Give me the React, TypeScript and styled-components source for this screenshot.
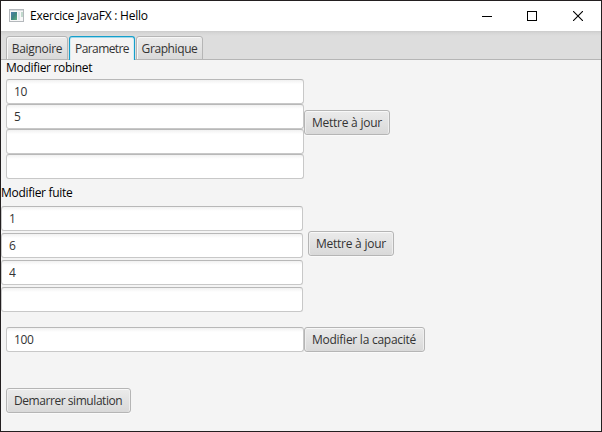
import React from "react";
import styled, { createGlobalStyle } from "styled-components";

const GlobalStyle = createGlobalStyle`
  *, *::before, *::after { box-sizing: border-box; }
  html, body { margin: 0; padding: 0; overflow: hidden; }
`;

const Window = styled.div`
  width: 602px;
  height: 432px;
  display: flex;
  flex-direction: column;
  border: 1px solid #231f20;
  background: #f4f4f4;
  font-family: "Open Sans", "Noto Sans", sans-serif;
  font-size: 12px;
  line-height: 16px;
  color: #333;
`;

const TitleBar = styled.header`
  height: 30px;
  flex: none;
  display: flex;
  align-items: center;
  background: #fff;
  color: #000;
`;

const AppIcon = styled.svg`
  display: block;
  flex: none;
  margin: 0 5px 0 8px;
`;

const Text = styled.span<{ $spacing?: number }>`
  white-space: nowrap;
  letter-spacing: ${(p) => p.$spacing ?? -0.3}px;
`;

const WindowControls = styled.div`
  display: flex;
  margin-left: auto;
`;

const ControlButton = styled.button`
  width: 45px;
  height: 30px;
  padding: 0 0 0 17px;
  display: flex;
  align-items: center;
  border: 0;
  background: transparent;

  &:last-child {
    width: 46px;
    padding-left: 18px;
  }
`;

const TabHeader = styled.nav`
  height: 29px;
  flex: none;
  display: flex;
  align-items: flex-end;
  gap: 1px;
  padding-left: 5px;
  background: linear-gradient(#cbcbcb, #d6d6d6 2px, #dddddd 5px, #dddddd);
  box-shadow: inset 0 -1px #b5b5b5;
`;

const Tab = styled.button<{ $width: number; $active?: boolean }>`
  width: ${(p) => p.$width}px;
  height: 24px;
  padding: 1px 0 0;
  display: flex;
  align-items: center;
  justify-content: center;
  border: 1px solid ${(p) => (p.$active ? "#159fcb" : "#b5b5b5")};
  border-bottom: ${(p) => (p.$active ? "0" : "1px solid #b5b5b5")};
  border-radius: 3px 3px 0 0;
  background: ${(p) => (p.$active ? "#f4f4f4" : "linear-gradient(#ebebeb, #d9d9d9)")};
  box-shadow: ${(p) =>
    p.$active ? "inset 0 1px #9fd8ea, inset 1px 0 #d3edf5, inset -1px 0 #d3edf5" : "inset 1px 1px #f7f7f7"};
  font: inherit;
  color: inherit;
`;

const Pane = styled.main`
  flex: 1;
  display: flex;
  flex-direction: column;
`;

const Section = styled.section<{ $indent?: number; $top?: number }>`
  display: flex;
  flex-direction: column;
  padding-left: ${(p) => p.$indent ?? 0}px;
  margin-top: ${(p) => p.$top ?? 0}px;
`;

const Label = styled.div<{ $height: number }>`
  height: ${(p) => p.$height}px;
  color: #000;
`;

const Row = styled.div<{ $gap?: number }>`
  display: flex;
  align-items: flex-start;
  gap: ${(p) => p.$gap ?? 0}px;
`;

const Fields = styled.div<{ $width: number; $gap?: number }>`
  width: ${(p) => p.$width}px;
  display: flex;
  flex-direction: column;
  gap: ${(p) => p.$gap ?? 0}px;
`;

const Field = styled.input`
  width: 100%;
  height: 25px;
  padding: 0 7px;
  border: 1px solid #c8c8c8;
  border-top-color: #b8b8b8;
  border-radius: 3px;
  outline: 0;
  background: linear-gradient(#f1f1f1, #fff 4px);
  font: inherit;
  letter-spacing: -0.3px;
  color: #333;
`;

const Button = styled.button<{ $width: number; $top?: number }>`
  width: ${(p) => p.$width}px;
  height: 25px;
  margin-top: ${(p) => p.$top ?? 0}px;
  padding: 0 0 0 7px;
  display: flex;
  align-items: center;
  border: 1px solid #b5b5b5;
  border-radius: 3px;
  background: linear-gradient(#ebebeb, #d9d9d9);
  box-shadow: inset 0 1px #f8f8f8, inset 1px 0 #eee, inset -1px 0 #eee, 0 1px #fafafa;
  font: inherit;
  color: inherit;
`;

function FieldGroup({ values, width, gap }: { values: string[]; width: number; gap?: number }) {
  return (
    <Fields $width={width} $gap={gap}>
      {values.map((value, i) => (
        <Field key={i} defaultValue={value} />
      ))}
    </Fields>
  );
}

export default function App() {
  return (
    <>
      <GlobalStyle />
      <Window>
        <TitleBar>
          <AppIcon width="16" height="14" viewBox="0 0 16 14" shapeRendering="crispEdges">
            <defs>
              <linearGradient id="panel" x1="0" y1="0" x2="1" y2="1">
                <stop offset="0" stopColor="#4d7fae" />
                <stop offset="0.5" stopColor="#3f8583" />
                <stop offset="1" stopColor="#62b07e" />
              </linearGradient>
            </defs>
            <rect x="0.5" y="0.5" width="14" height="12" fill="#f8f8f8" stroke="#b4b8bc" />
            <rect x="1" y="1" width="13" height="1" fill="#d7dcdf" />
            <rect x="2" y="3" width="6" height="8" fill="url(#panel)" />
            <rect x="9" y="3" width="2" height="8" fill="#dfe8ee" />
            <rect x="12" y="3" width="2" height="5" fill="#c1d9cd" />
          </AppIcon>
          <Text $spacing={-0.22}>Exercice JavaFX : Hello</Text>
          <WindowControls>
            <ControlButton aria-label="Minimize">
              <svg width="10" height="10" shapeRendering="crispEdges">
                <path d="M0 5.5H10" stroke="#000" />
              </svg>
            </ControlButton>
            <ControlButton aria-label="Maximize">
              <svg width="10" height="10" shapeRendering="crispEdges">
                <rect x="0.5" y="0.5" width="9" height="9" fill="none" stroke="#000" />
              </svg>
            </ControlButton>
            <ControlButton aria-label="Close">
              <svg width="10" height="10">
                <path d="M0 0L10 10M10 0L0 10" stroke="#000" strokeWidth="1.1" />
              </svg>
            </ControlButton>
          </WindowControls>
        </TitleBar>
        <TabHeader>
          <Tab $width={62}><Text>Baignoire</Text></Tab>
          <Tab $width={66} $active><Text $spacing={-0.6}>Parametre</Text></Tab>
          <Tab $width={67}><Text $spacing={-0.4}>Graphique</Text></Tab>
        </TabHeader>
        <Pane>
          <Section $indent={5}>
            <Label $height={19}><Text>Modifier robinet</Text></Label>
            <Row>
              <FieldGroup width={298} values={["10", "5", "", ""]} />
              <Button $width={86} $top={31}><Text $spacing={-0.25}>Mettre à jour</Text></Button>
            </Row>
          </Section>
          <Section $top={6}>
            <Label $height={21}><Text>Modifier fuite</Text></Label>
            <Row $gap={5}>
              <FieldGroup width={302} gap={2} values={["1", "6", "4", ""]} />
              <Button $width={86} $top={25}><Text $spacing={-0.25}>Mettre à jour</Text></Button>
            </Row>
          </Section>
          <Section $indent={5} $top={15}>
            <Row>
              <FieldGroup width={298} values={["100"]} />
              <Button $width={121}><Text $spacing={-0.26}>Modifier la capacité</Text></Button>
            </Row>
          </Section>
          <Section $indent={5} $top={36}>
            <Button $width={125}><Text $spacing={-0.44}>Demarrer simulation</Text></Button>
          </Section>
        </Pane>
      </Window>
    </>
  );
}
